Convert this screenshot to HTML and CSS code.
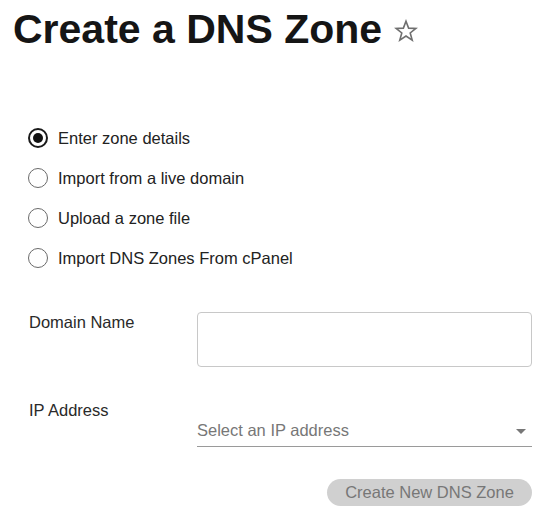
FILE: index.html
```html
<!DOCTYPE html>
<html lang="en">
<head>
<meta charset="utf-8">
<title>Create a DNS Zone</title>
<link rel="stylesheet" href="styles.css">
</head>
<body>
<div class="page">
  <div class="header">
    <h1 class="title">Create a DNS Zone</h1>
    <svg class="star" width="24" height="24" viewBox="0 0 24 24" aria-hidden="true">
      <path d="M12 2.2l2.6 6.9 7.3.3-5.7 4.6 2 7.1L12 17l-6.2 4.1 2-7.1L2.1 9.4l7.3-.3z" fill="none" stroke="#6f6f6f" stroke-width="1.6" stroke-linejoin="miter"/>
    </svg>
  </div>

  <div class="radios">
    <label class="radio-row"><span class="radio checked"></span><span class="radio-label">Enter zone details</span></label>
    <label class="radio-row"><span class="radio"></span><span class="radio-label">Import from a live domain</span></label>
    <label class="radio-row"><span class="radio"></span><span class="radio-label">Upload a zone file</span></label>
    <label class="radio-row"><span class="radio"></span><span class="radio-label">Import DNS Zones From cPanel</span></label>
  </div>

  <div class="form">
    <div class="field-row">
      <div class="field-label">Domain Name</div>
      <div class="text-input"></div>
    </div>
    <div class="field-row ip-row">
      <div class="field-label">IP Address</div>
      <div class="select">
        <span class="placeholder">Select an IP address</span>
        <span class="caret"></span>
      </div>
    </div>
    <div class="actions">
      <button class="btn" type="button">Create New DNS Zone</button>
    </div>
  </div>
</div>
</body>
</html>
```

FILE: styles.css
```css
html, body {
  margin: 0;
  padding: 0;
  background: #fff;
}

.page {
  padding: 0 21px 0 13px;
  font-family: "Liberation Sans", Arial, sans-serif;
  color: #2a2a2a;
}

.header {
  display: flex;
  align-items: center;
  gap: 12px;
  margin-top: 5px;
  height: 48px;
}

.title {
  margin: 0;
  font-size: 41px;
  line-height: 48px;
  font-weight: 700;
  color: #151515;
}

.star {
  display: block;
  margin-top: 3px;
}

.radios {
  margin-top: 65px;
  padding-left: 15px;
  display: flex;
  flex-direction: column;
}

.radio-row {
  display: flex;
  align-items: center;
  height: 40px;
  gap: 10px;
}

.radio {
  box-sizing: border-box;
  width: 20px;
  height: 20px;
  border-radius: 50%;
  border: 1.6px solid #6a6a6a;
  display: flex;
  align-items: center;
  justify-content: center;
}

.radio.checked {
  border: 2px solid #1a1a1a;
}

.radio.checked::after {
  content: "";
  width: 10px;
  height: 10px;
  border-radius: 50%;
  background: #111;
}

.radio-label {
  font-size: 16.5px;
  line-height: 20px;
  color: #222;
}

.form {
  margin-top: 34px;
  padding-left: 16px;
  display: flex;
  flex-direction: column;
}

.field-row {
  display: grid;
  grid-template-columns: 168px 1fr;
  align-items: start;
}

.field-label {
  font-size: 16.5px;
  line-height: 20px;
  color: #2a2a2a;
}

.text-input {
  box-sizing: border-box;
  height: 55px;
  border: 1px solid #c8c8c8;
  border-radius: 4px;
}

.ip-row {
  margin-top: 33px;
}

.select {
  display: flex;
  align-items: center;
  justify-content: space-between;
  padding: 20px 6px 6px 0;
  border-bottom: 1px solid #9a9a9a;
}

.placeholder {
  font-size: 16.5px;
  line-height: 20px;
  color: #777;
}

.caret {
  width: 0;
  height: 0;
  border-left: 5px solid transparent;
  border-right: 5px solid transparent;
  border-top: 5px solid #777;
  margin-top: 2px;
}

.actions {
  display: flex;
  justify-content: flex-end;
  margin-top: 32px;
}

.btn {
  height: 27px;
  width: 205px;
  padding: 0 14px;
  border: none;
  border-radius: 14px;
  background: #d0d0d0;
  color: #777;
  font-family: "Liberation Sans", Arial, sans-serif;
  font-size: 16.5px;
  line-height: 27px;
  cursor: default;
}
```
